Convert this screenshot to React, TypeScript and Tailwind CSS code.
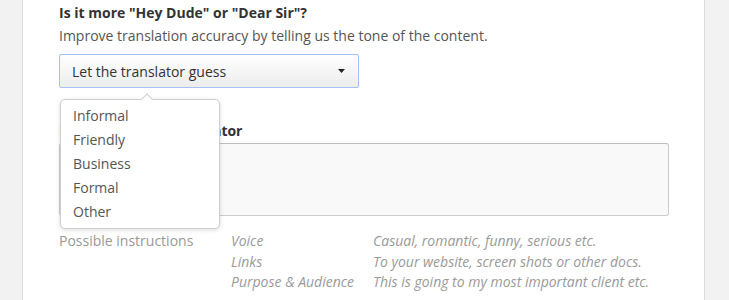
import React from 'react';

const tones = ['Informal', 'Friendly', 'Business', 'Formal', 'Other'];

const hints = [
  ['Voice', 'Casual, romantic, funny, serious etc.'],
  ['Links', 'To your website, screen shots or other docs.'],
  ['Purpose & Audience', 'This is going to my most important client etc.'],
];

export default function App() {
  return (
    <div className="h-[300px] w-[729px] overflow-hidden bg-[#f2f2f2] pl-[22px] pr-[24px] font-['Open_Sans',sans-serif] text-[14px]">
      <div className="h-full border-l border-r border-[#dcdcdc] bg-white px-[36px] pt-[3px]">
        <h2 className="text-[14px] font-bold leading-[20px] text-[#333]">Is it more "Hey Dude" or "Dear Sir"?</h2>
        <p className="mt-[3px] leading-[20px] text-[#555]">Improve translation accuracy by telling us the tone of the content.</p>

        <div className="relative mt-[8px]">
          <button className="flex h-[34px] w-[300px] items-center justify-between rounded-[2px] border border-[#a4c2f4] bg-gradient-to-b from-white to-[#ececec] pl-[12px] pr-[13px] text-left text-[#333]">
            <span>Let the translator guess</span>
            <svg width="7" height="4" viewBox="0 0 7 4">
              <path d="M0 0h7L3.5 4z" fill="#222" />
            </svg>
          </button>

          {/* tone menu, open */}
          <div className="absolute left-[1px] top-[45px] z-10 w-[160px] rounded-[5px] border border-[#cfcfcf] bg-white py-[4px] shadow-[0_1px_4px_rgba(0,0,0,0.15)]">
            <div className="absolute -top-[5px] left-[82px] h-[8px] w-[8px] rotate-45 border-l border-t border-[#cfcfcf] bg-white" />
            <ul className="relative">
              {tones.map((t) => (
                <li key={t} className="px-[12px] leading-[24px] text-[#555]">
                  {t}
                </li>
              ))}
            </ul>
          </div>
        </div>

        <h3 className="mt-[33px] font-bold leading-[20px] tracking-[-0.1px] text-[#333]">Message for the translator</h3>
        <div className="mt-[2px] h-[73px] w-[610px] rounded-[3px] border border-[#cccccc] border-t-[#bdbdbd] bg-[#f9f9f9]" />

        <div className="mt-[15px] flex leading-[20.5px]">
          <div className="w-[172px] text-[#999]">Possible instructions</div>
          <div className="grid grid-cols-[142px_1fr] italic text-[#9a9a9a]">
            {hints.map(([k, v]) => (
              <React.Fragment key={k}>
                <div>{k}</div>
                <div>{v}</div>
              </React.Fragment>
            ))}
          </div>
        </div>
      </div>
    </div>
  );
}
